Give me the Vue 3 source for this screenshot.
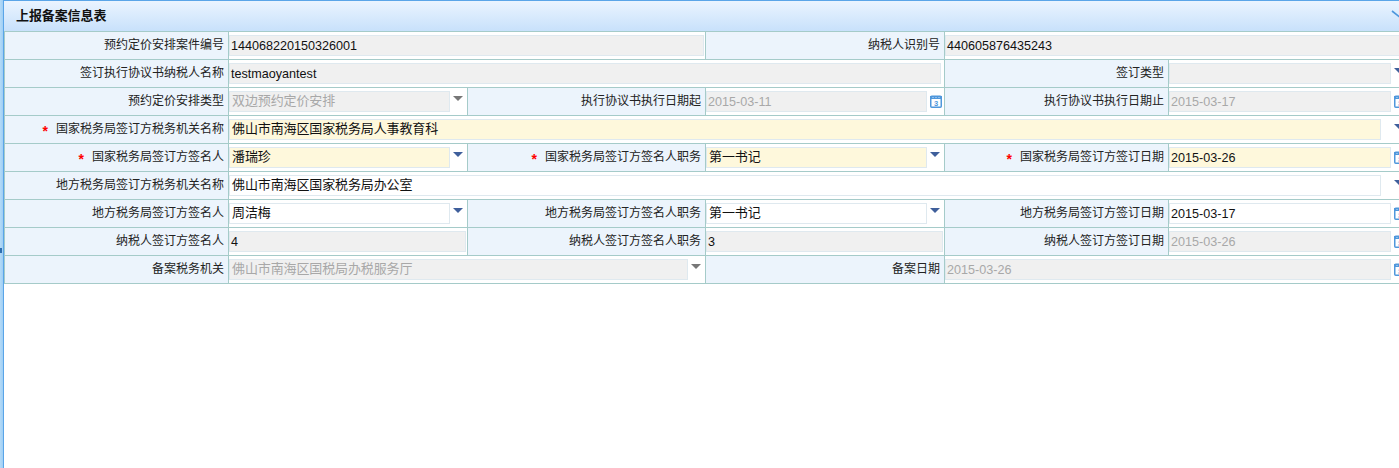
<script setup>
const L = (text, req = false) => ({ t: 'label', text, req })
const F = (kind, tone, text, span = 1, extra = {}) => ({ t: 'field', kind, tone, text, span, ...extra })

const cells = [
  L('预约定价安排案件编号'), F('text', 'gray', '144068220150326001', 2, { latin: true }),
  L('纳税人识别号'), F('text', 'gray', '440605876435243', 2, { latin: true }),

  L('签订执行协议书纳税人名称'), F('text', 'gray', 'testmaoyantest', 3, { latin: true, inset: true }),
  L('签订类型'), F('select', 'gray', '', 1),

  L('预约定价安排类型'), F('select', 'gray', '双边预约定价安排', 1, { muted: true, off: true }),
  L('执行协议书执行日期起'), F('date', 'gray', '2015-03-11', 1, { muted: true, latin: true }),
  L('执行协议书执行日期止'), F('date', 'gray', '2015-03-17', 1, { muted: true, latin: true }),

  L('国家税务局签订方税务机关名称', true), F('select', 'yellow', '佛山市南海区国家税务局人事教育科', 5, { wide: true }),

  L('国家税务局签订方签名人', true), F('select', 'yellow', '潘瑞珍'),
  L('国家税务局签订方签名人职务', true), F('select', 'yellow', '第一书记'),
  L('国家税务局签订方签订日期', true), F('date', 'yellow', '2015-03-26', 1, { latin: true }),

  L('地方税务局签订方税务机关名称'), F('select', 'white', '佛山市南海区国家税务局办公室', 5, { wide: true }),

  L('地方税务局签订方签名人'), F('select', 'white', '周洁梅'),
  L('地方税务局签订方签名人职务'), F('select', 'white', '第一书记'),
  L('地方税务局签订方签订日期'), F('date', 'white', '2015-03-17', 1, { latin: true }),

  L('纳税人签订方签名人'), F('text', 'gray', '4', 1, { latin: true }),
  L('纳税人签订方签名人职务'), F('text', 'gray', '3', 1, { latin: true }),
  L('纳税人签订方签订日期'), F('date', 'gray', '2015-03-26', 1, { muted: true, latin: true }),

  L('备案税务机关'), F('select', 'gray', '佛山市南海区国税局办税服务厅', 2, { muted: true, off: true }),
  L('备案日期'), F('date', 'gray', '2015-03-26', 2, { muted: true, latin: true })
]
</script>

<template>
  <div class="page">
    <div class="split"><i class="handle"></i></div>
    <section class="panel">
      <header class="head">
        <h2>上报备案信息表</h2>
        <svg class="chev" width="16" height="8" viewBox="0 0 16 8">
          <path d="M1 1 L8 6.5 L15 1" fill="none" stroke="#4f97dc" stroke-width="1.6" />
        </svg>
      </header>
      <div class="grid">
        <template v-for="(c, i) in cells" :key="i">
          <div v-if="c.t === 'label'" class="cell label">
            <span v-if="c.req" class="star">*</span>{{ c.text }}
          </div>
          <div
            v-else
            class="cell field"
            :class="[`span${c.span}`, c.kind, { wide: c.wide, inset: c.inset }]"
          >
            <div class="box" :class="[c.tone, { muted: c.muted, latin: c.latin }]">{{ c.text }}</div>
            <span v-if="c.kind === 'select'" class="arrow" :class="{ off: c.off }"></span>
            <svg v-if="c.kind === 'date'" class="cal" width="12" height="13" viewBox="0 0 12 13">
              <rect x="0.75" y="1.25" width="10.5" height="11" rx="1" fill="#fff" stroke="#4f97dc" stroke-width="1.5" />
              <rect x="0" y="1" width="12" height="3" fill="#4f97dc" />
              <path d="M2.5 2.5 H3.5 M5.5 2.5 H6.5 M8.5 2.5 H9.5" stroke="#cfe4f8" stroke-width="1" />
              <text x="6" y="10.8" text-anchor="middle" class="calnum">3</text>
            </svg>
          </div>
        </template>
      </div>
    </section>
  </div>
</template>

<style>
html, body { margin: 0; background: #fff; overflow: hidden; }
</style>

<style scoped>
.page {
  display: flex;
  width: 1399px;
  height: 468px;
  overflow: hidden;
  background: #fff;
  color: #000;
  font-family: "Liberation Sans", "Noto Sans CJK SC", sans-serif;
  position: relative;
}
.split {
  flex: 0 0 4px;
  background: linear-gradient(90deg, #b4daf7 0, #9fcff5 3px, #5aa5e8 3px);
  position: relative;
}
.handle {
  position: absolute;
  left: 0;
  top: 248px;
  width: 2px;
  height: 5px;
  background: #2f6fb0;
}
.panel {
  flex: 0 0 1404px;
  width: 1404px;
}
.head {
  box-sizing: border-box;
  border-top: 1px solid #5aa5e8;
  height: 31px;
  background: linear-gradient(180deg, #eaf4ff, #c8e1fb);
  display: flex;
  align-items: center;
  padding-left: 12px;
  position: relative;
}
.head h2 {
  margin: 0;
  font-size: 13px;
  font-weight: 700;
  letter-spacing: -0.1px;
  line-height: 30px;
  color: #111;
}
.chev { position: absolute; left: 1387px; top: 9px; }
.grid {
  display: grid;
  grid-template-columns: 224px 239px 238px 239px 224px 240px;
  grid-auto-rows: 28px;
  border-top: 1px solid #a5cbc9;
}
.cell {
  box-sizing: border-box;
  border-bottom: 1px solid #a5cbc9;
  border-left: 1px solid #a5cbc9;
  min-width: 0;
}
.label {
  background: #ecf4fc;
  font-size: 12px;
  text-align: right;
  padding-right: 4px;
  line-height: 27px;
  color: #222;
  white-space: nowrap;
}
.star {
  display: inline-block;
  color: #f00;
  font-weight: 700;
  font-size: 14px;
  line-height: 12px;
  vertical-align: -3px;
  margin-right: 8px;
}
.field {
  background: #fff;
  padding: 3px 1px 2px 0;
  position: relative;
  display: flex;
}
.span2 { grid-column: span 2; }
.span3 { grid-column: span 3; }
.span5 { grid-column: span 5; }
.field.inset { padding-right: 3px; }
.field.select { padding-right: 17px; }
.field.date { padding-right: 17px; }
.field.wide { padding-right: 27px; }
.box {
  flex: 1;
  min-width: 0;
  box-sizing: border-box;
  height: 21px;
  border: 1px solid #dfe9ef;
  padding-left: 2px;
  font-size: 13px;
  letter-spacing: -0.12px;
  line-height: 18px;
  white-space: nowrap;
  overflow: hidden;
  color: #111;
}
.box.latin { font-size: 12.6px; letter-spacing: 0; line-height: 21px; padding-left: 1px; }
.gray { background: #f0f0f0; }
.yellow { background: #fef8dc; }
.white { background: #fff; }
.muted { color: #a8a8a8; }
.arrow {
  position: absolute;
  right: 4px;
  top: 8px;
  width: 0;
  height: 0;
  border-left: 5px solid transparent;
  border-right: 5px solid transparent;
  border-top: 5px solid #3f5f9b;
}
.arrow.off { border-top-color: #777; }
.cal { position: absolute; right: 2px; top: 7px; }
.calnum { font-size: 7.5px; font-weight: 700; fill: #4f97dc; font-family: "Liberation Sans", sans-serif; }
</style>
